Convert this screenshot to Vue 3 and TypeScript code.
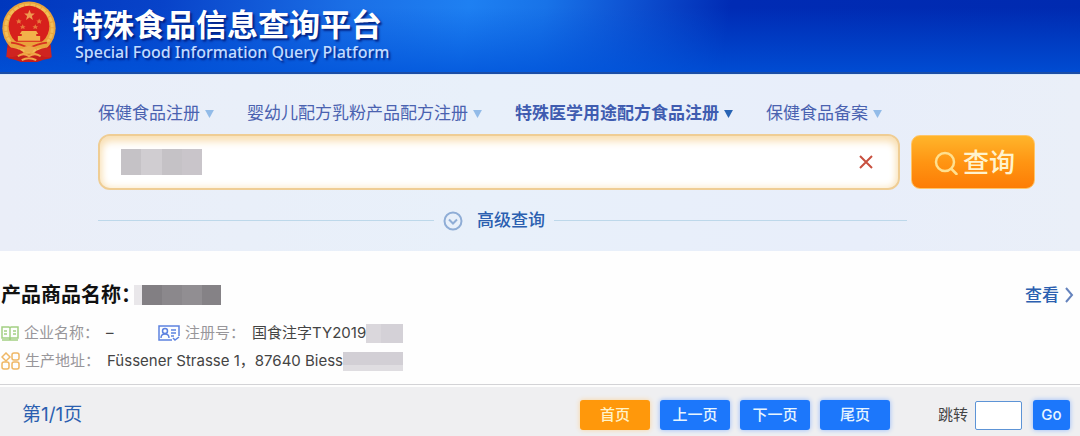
<script setup lang="ts">
import { ref } from 'vue'

interface Tab {
  label: string
  active: boolean
}

const tabs = ref<Tab[]>([
  { label: '保健食品注册', active: false },
  { label: '婴幼儿配方乳粉产品配方注册', active: false },
  { label: '特殊医学用途配方食品注册', active: true },
  { label: '保健食品备案', active: false },
])

const pageButtons = ['首页', '上一页', '下一页', '尾页']
const currentButton = ref('首页')
const keyword = ref('')
const jump = ref('')

function selectTab(tab: Tab) {
  tabs.value.forEach((t) => (t.active = t === tab))
}
</script>

<template>
  <div class="page">
    <header class="banner">
      <svg class="emblem" viewBox="0 0 57 64" aria-hidden="true">
        <path d="M6 45 L7 59 Q17 61 20 63 L37 63 Q43 60 51 59 L51 45Z" fill="#c51d1b" />
        <circle cx="28.500" cy="28" r="27.500" fill="#e9a23b" />
        <circle cx="28.500" cy="28" r="24" fill="none" stroke="#f2bd56" stroke-width="3" stroke-dasharray="5 1" />
        <circle cx="28.500" cy="26" r="21" fill="#d7201c" />
        <path d="M29 9l1.500 4h4l-3 2.500 1 4-3.500-2.500-3.500 2.500 1-4-3-2.500h4z" fill="#ef9a50" />
        <path d="M18 18l1 2h2l-1.500 1.500.5 2-2-1-2 1 .5-2-1.500-1.500h2zM39 18l1 2h2l-1.500 1.500.5 2-2-1-2 1 .5-2-1.500-1.500h2zM22 24l1 2h2l-1.500 1 .5 2-2-1-2 1 .5-2-1.500-1h2zM35 24l1 2h2l-1.500 1 .5 2-2-1-2 1 .5-2-1.500-1h2z" fill="#e8793c" />
        <path d="M21 31h15l2 3h-2v2h4v5H17v-5h4v-2h-2z" fill="#f2b24a" />
        <path d="M6 42h45l-5 7H11z" fill="#e9a23b" />
        <path d="M10 43q10 1 18.500 6Q37 44 47 43" fill="none" stroke="#d7301f" stroke-width="2" />
        <path d="M6 48q11 0 17 5-8 6-18 5zM51 48q-11 0-17 5 8 6 18 5z" fill="#cf2420" />
        <path d="M22 48q6-3 13 0l-3 5h-7z" fill="#eda848" />
        <path d="M17 57q6-4 11.500 0 6-4 12 0M21 61q7-4 15 0" fill="none" stroke="#f0a548" stroke-width="2" />
      </svg>
      <div class="brand">
        <h1>特殊食品信息查询平台</h1>
        <p>Special Food Information Query Platform</p>
      </div>
    </header>

    <form class="search" @submit.prevent>
      <nav class="tabs">
        <button
          v-for="tab in tabs"
          :key="tab.label"
          type="button"
          class="tab"
          :class="{ active: tab.active }"
          @click="selectTab(tab)"
        >
          {{ tab.label }}
          <svg width="9" height="8" viewBox="0 0 10 9" aria-hidden="true"><path d="M0 0h10L5 9z" fill="currentColor" /></svg>
        </button>
      </nav>
      <div class="query">
        <div class="field">
          <span class="mask mask-query"></span>
          <input v-model="keyword" type="text" aria-label="查询" />
          <button type="button" class="clear" aria-label="×" @click="keyword = ''">
            <svg width="14" height="14" viewBox="0 0 14 14"><path d="M1 1l12 12M13 1L1 13" stroke="#c8503f" stroke-width="2" /></svg>
          </button>
        </div>
        <button type="submit" class="submit">
          <svg width="24" height="24" viewBox="0 0 24 24" fill="none" stroke="#ffe08f" stroke-width="2.500" stroke-linecap="round" aria-hidden="true">
            <circle cx="11" cy="11" r="9" />
            <path d="M17.500 18l5 5" />
          </svg>
          查询
        </button>
      </div>
      <div class="advanced">
        <span class="rule"></span>
        <button type="button" class="advanced-toggle">
          <svg width="20" height="20" viewBox="0 0 20 20" fill="none" stroke="#8fadd6" stroke-width="2" aria-hidden="true">
            <circle cx="10" cy="10" r="8.500" />
            <path d="M6 8.500l4 4 4-4" />
          </svg>
          高级查询
        </button>
        <span class="rule rule-end"></span>
      </div>
    </form>

    <main class="result">
      <div class="result-head">
        <h2>产品商品名称：</h2>
        <span class="mask mask-name"></span>
        <a href="#" class="view">
          查看
          <svg width="9" height="16" viewBox="0 0 9 16" fill="none" stroke="#6583bd" stroke-width="2" aria-hidden="true"><path d="M1 1l6 7-6 7" /></svg>
        </a>
      </div>
      <dl class="line">
        <div class="item company">
          <svg width="18" height="15" viewBox="0 0 18 15" fill="none" stroke="#a3cf83" stroke-width="1.500" aria-hidden="true">
            <path d="M1 1h7l1 1 1-1h7v11h-7l-1 1-1-1H1zM9 2v11M3 5h3M3 8h3M12 5h3M12 8h3M1 14h16" />
          </svg>
          <dt>企业名称：</dt>
          <dd>–</dd>
        </div>
        <div class="item">
          <svg width="22" height="16" viewBox="0 0 22 16" fill="none" stroke="#5d82e0" stroke-width="1.500" aria-hidden="true">
            <path d="M14 15H1V1h20v10M3 13q0-4 4-4t4 4M13 5h5M13 8h5M13 11h3M15 13l2 2 4-3" />
            <circle cx="7" cy="6" r="2.500" />
          </svg>
          <dt>注册号：</dt>
          <dd>国食注字TY2019</dd>
          <span class="mask mask-number"></span>
        </div>
      </dl>
      <dl class="line">
        <div class="item">
          <svg width="19" height="18" viewBox="0 0 19 18" fill="none" stroke="#efb765" stroke-width="1.500" aria-hidden="true">
            <path d="M5 1l4 4-4 4-4-4z" />
            <rect x="11" y="1" width="7" height="7" rx="2" />
            <rect x="1" y="10" width="7" height="7" rx="2" />
            <rect x="11" y="10" width="7" height="7" rx="2" />
          </svg>
          <dt>生产地址：</dt>
          <dd>Füssener Strasse 1，87640 Biess</dd>
          <span class="mask mask-address"></span>
        </div>
      </dl>
    </main>

    <footer class="pager">
      <span class="count">第1/1页</span>
      <div class="pages">
        <button
          v-for="name in pageButtons"
          :key="name"
          type="button"
          class="btn"
          :class="{ current: name === currentButton }"
          @click="currentButton = name"
        >{{ name }}</button>
      </div>
      <label for="jump">跳转</label>
      <input id="jump" v-model="jump" type="text" />
      <button type="button" class="btn go">Go</button>
    </footer>
  </div>
</template>

<style>
body {
  margin: 0;
  background: #fefefe;
}
</style>

<style scoped>
.page {
  font-family: Inter, "Noto Sans CJK SC", sans-serif;
  color: #444;
}
button,
input {
  font-family: inherit;
  margin: 0;
  padding: 0;
  border: 0;
  background: none;
  box-sizing: border-box;
}
button {
  cursor: pointer;
}
svg {
  flex: none;
}
h1, h2, p, dl, dt, dd {
  margin: 0;
}
.banner {
  display: flex;
  align-items: flex-start;
  gap: 15px;
  box-sizing: border-box;
  height: 74px;
  padding: 1px 0 0 1px;
  border-bottom: 2px solid #1b4da6;
  background:
    linear-gradient(to bottom, rgba(0, 84, 218, 0) 10%, rgba(0, 84, 218, 0.8) 100%),
    linear-gradient(100deg, #0037bd 0%, #0843c9 15%, #1b6fe6 32%, #1e80f2 43%, #1873e8 50%, #0f55d4 57%, #002bb4 67%, #002ab0 100%);
}
.emblem {
  width: 56px;
  height: 62px;
}
.brand {
  padding-top: 7px;
  color: #fff;
  text-shadow: 2px 2px 2px rgba(0, 20, 110, 0.8);
}
.brand h1 {
  font-size: 31px;
  line-height: 34px;
  font-weight: 700;
}
.brand p {
  padding-left: 3px;
  font-family: "Noto Sans", sans-serif;
  font-size: 16px;
  line-height: 20px;
  font-weight: 500;
  color: #c2dbff;
}
.search {
  display: flex;
  flex-direction: column;
  padding: 26px 45px 18px 98px;
  background: linear-gradient(to right, #eaeef8, #e8f0fa 45%, #e8eefa 80%, #eaeff8);
  border-top: 1px solid #d8e9fb;
}
.tabs {
  display: flex;
  gap: 33px;
  margin-bottom: 8px;
}
.tab {
  display: flex;
  align-items: center;
  gap: 5px;
  font-size: 17px;
  line-height: 25px;
  color: #4a62b0;
  white-space: nowrap;
}
.tab svg {
  color: #92bbe8;
}
.tab.active {
  font-weight: 700;
  color: #3f5cb0;
}
.tab.active svg {
  color: #2864b4;
}
.query {
  display: flex;
  align-items: center;
  gap: 11px;
}
.field {
  display: flex;
  flex: 1;
  align-items: center;
  box-sizing: border-box;
  height: 56px;
  padding: 0 25px 0 21px;
  border: 2px solid #efcd94;
  border-radius: 12px;
  background: #fff;
  box-shadow: inset 0 5px 9px #f8dfb4, inset 0 0 8px #fbe8c4;
}
.field input {
  flex: 1;
  min-width: 0;
  height: 40px;
  font-size: 17px;
  outline: none;
}
.clear {
  display: flex;
}
.mask {
  flex: none;
}
.mask-query {
  width: 81px;
  height: 26px;
  background: linear-gradient(to right, #c5c2c6 25%, #d0cdd1 25% 50%, #c5c2c6 50% 75%, #c9c5ca 75%);
}
.submit {
  display: flex;
  align-items: center;
  justify-content: center;
  gap: 5px;
  width: 124px;
  height: 54px;
  padding: 2px 0 0 3px;
  border: 1px solid #ffc568;
  border-radius: 9px;
  background: linear-gradient(to bottom, #ffb52b, #ff9513 50%, #fd7d05);
  color: #fff3cd;
  font-size: 26px;
  line-height: 38px;
  font-weight: 500;
}
.advanced {
  display: flex;
  align-items: center;
  gap: 9px;
  margin: 18px 128px 0 0;
}
.rule {
  flex: 20;
  height: 1px;
  background: #bdd8ea;
}
.rule-end {
  flex: 21;
}
.advanced-toggle {
  display: flex;
  align-items: center;
  gap: 14px;
  font-size: 17px;
  line-height: 25px;
  font-weight: 500;
  color: #2b5fb0;
}
.result {
  padding: 29px 0 9px;
  border-bottom: 1px solid #d3d3d6;
}
.result-head {
  display: flex;
  align-items: center;
  padding: 0 6px 0 1px;
  margin-bottom: 9px;
}
.result-head h2 {
  font-size: 20px;
  line-height: 30px;
  font-weight: 700;
  color: #111;
}
.mask-name {
  width: 87px;
  height: 20px;
  margin-left: -7px;
  background: linear-gradient(to right, #e9e7ea 8px, #827f83 8px 28px, #8b888c 28px 48px, #918e92 48px 68px, #858286 68px);
}
.view {
  display: flex;
  align-items: center;
  gap: 6px;
  margin-left: auto;
  font-size: 17px;
  line-height: 25px;
  font-weight: 500;
  color: #2b5fb0;
  text-decoration: none;
}
.line {
  display: flex;
  height: 28px;
}
.item {
  display: flex;
  align-items: center;
  gap: 5px;
  padding-left: 1px;
  font-size: 15px;
  line-height: 22px;
  white-space: nowrap;
}
.company {
  width: 156px;
}
.item dt {
  color: #98969a;
}
.item dd {
  margin-left: 2px;
}
.item .mask {
  margin-left: -5px;
}
.mask-number {
  width: 37px;
  height: 19px;
  background: linear-gradient(to right, #dad7dc 40%, #d4d1d7 40%);
}
.mask-address {
  width: 60px;
  height: 19px;
  background: linear-gradient(to bottom, #d2cfd5 66%, #dfdde1 66%);
}
.pager {
  display: flex;
  align-items: center;
  margin-top: 2px;
  padding: 13px 10px 6px 22px;
  background: #efeff1;
}
.count {
  margin-right: auto;
  font-size: 19px;
  line-height: 26px;
  color: #2b5fb0;
}
.pages {
  display: flex;
  gap: 10px;
  margin-right: 48px;
}
.btn {
  width: 70px;
  height: 30px;
  border-radius: 3px;
  background: #1c77fb;
  box-shadow: 0 0 5px #92b8fa;
  color: #e7f5ff;
  font-size: 15px;
  line-height: 22px;
  font-weight: 500;
}
.btn.current {
  background: #ff980b;
  box-shadow: 0 0 5px #fbd49b;
  color: #fff3c8;
}
.pager label {
  margin-right: 7px;
  font-size: 15px;
  line-height: 22px;
}
.pager input {
  width: 47px;
  height: 29px;
  border: 1px solid #5d94d6;
  border-radius: 2px;
  background: #fff;
  font-size: 15px;
  text-align: center;
}
.btn.go {
  width: 37px;
  margin-left: 11px;
}
</style>
